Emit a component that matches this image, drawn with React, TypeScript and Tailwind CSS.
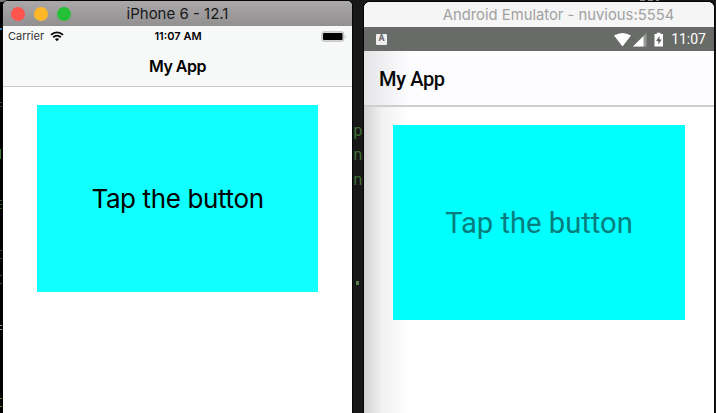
import React from "react";

function EditorBackdrop() {
  return (
    <div className="absolute inset-0 bg-[#171717] font-['DejaVu_Sans_Mono',monospace] text-[16px] leading-none text-[#3f6b35]">
      <div className="absolute inset-y-0 left-0 w-[3px] bg-black" />
      <div className="absolute top-0 left-[80px] h-[2px] w-[15px] bg-[#2878a8]" />
      <div className="absolute top-0 left-0 h-[2px] w-[22px] bg-[#777]" />
      <div className="absolute top-0 left-[108px] h-[2px] w-[58px] bg-[repeating-linear-gradient(90deg,#555_0_4px,#171717_4px_8px)]" />
      <div className="absolute top-0 left-[640px] h-[2px] w-[19px] bg-[repeating-linear-gradient(90deg,#888_0_5px,#171717_5px_8px)]" />
      <span className="absolute top-[123px] left-[353px]">p</span>
      <span className="absolute top-[147px] left-[353px]">n</span>
      <span className="absolute top-[172px] left-[353px]">n</span>
      <span className="absolute top-[281px] left-[356px] h-[4px] w-[3px] bg-[#56794e]" />
      <span className="absolute top-[28px] left-0 h-[2px] w-[3px] bg-[#2878a8]" />
      <span className="absolute top-[102px] left-0 h-[8px] w-[2px] bg-[repeating-linear-gradient(#2d5a20_0_1px,#000_1px_4px)]" />
      <span className="absolute top-[149px] left-0 h-[10px] w-[1px] bg-[#3f7a35]" />
      <span className="absolute top-[200px] left-0 h-[10px] w-[2px] bg-[repeating-linear-gradient(#2d5a20_0_1px,#000_1px_4px)]" />
      <span className="absolute top-[250px] left-0 h-[10px] w-[2px] bg-[repeating-linear-gradient(#2d5a20_0_1px,#000_1px_8px)]" />
      <span className="absolute top-[275px] left-0 h-[15px] w-[2px] bg-[repeating-linear-gradient(#2d5a20_0_1px,#000_1px_8px)]" />
      <span className="absolute top-[325px] left-0 h-[6px] w-[2px] bg-[repeating-linear-gradient(#999_0_1px,#000_1px_4px)]" />
      <span className="absolute top-[398px] left-0 h-[10px] w-[2px] bg-[repeating-linear-gradient(#86864a_0_1px,#000_1px_8px)]" />
    </div>
  );
}

function WifiIcon() {
  return (
    <svg className="h-[11px] w-[14px]" viewBox="0 0 14 11" fill="none" stroke="#080808" strokeWidth="1.9">
      <path d="M1 3.9C4.5.5 9.5.5 13 3.9" />
      <path d="M3.2 6.3C5.4 4.2 8.6 4.2 10.8 6.3" />
      <path d="M4.9 8Q7 6.3 9.1 8L7 10.2Z" fill="#080808" stroke="none" />
    </svg>
  );
}

function IPhoneWindow() {
  return (
    <section className="absolute top-px left-[3px] flex h-[412px] w-[349px] flex-col overflow-hidden rounded-t-[5px] bg-white font-[Inter,sans-serif] text-black shadow-[0_0_0_1px_#050505]">
      <div className="flex h-[25px] shrink-0 items-center bg-linear-to-b from-[#aaa8a9] to-[#918f90] px-[8px] pt-px">
        <div className="flex flex-1 gap-[9px]">
          <i className="size-[14px] rounded-full bg-[#ff554f]" />
          <i className="size-[14px] rounded-full bg-[#ffb729]" />
          <i className="size-[14px] rounded-full bg-[#24c138]" />
        </div>
        <h1 className="text-[15px] whitespace-nowrap text-[#181818]">iPhone 6 - 12.1</h1>
        <div className="flex-1" />
      </div>
      <header className="h-[61px] shrink-0 border-b border-[#c9c9cb] bg-[#f7f8f8]">
        <div className="grid h-[21px] grid-cols-3 items-center px-[5px]">
          <div className="flex items-center gap-[6px] text-[11px] text-[#333]">
            <span>Carrier</span>
            <WifiIcon />
          </div>
          <span className="pl-px text-center text-[11px] font-semibold whitespace-nowrap">11:07 AM</span>
          <svg className="h-[11px] w-[26px] justify-self-end" viewBox="0 0 26 11">
            <rect x=".8" y=".8" width="22" height="9.4" rx="2" fill="#ddd" stroke="#bbb" />
            <rect x="2" y="2" width="19.5" height="7" rx="1" fill="#000" />
            <path d="M24 4Q25.5 5.5 24 7Z" fill="#999" />
          </svg>
        </div>
        <h2 className="flex h-[38px] items-center justify-center text-[16px] font-semibold tracking-[-0.5px]">My App</h2>
      </header>
      <main className="pt-[18px] pl-[34px]">
        <div className="flex h-[187px] w-[281px] items-center justify-center bg-[#10ffff] text-[26px] tracking-[-0.37px]">
          <span className="whitespace-nowrap">Tap the button</span>
        </div>
      </main>
    </section>
  );
}

function AndroidWindow() {
  return (
    <section className="absolute top-[2px] left-[364px] flex h-[411px] w-[350px] flex-col overflow-hidden rounded-t-[6px] bg-white font-[Roboto,sans-serif] shadow-[0_0_0_1px_#050505]">
      <div className="flex h-[25px] shrink-0 items-center justify-center bg-[#f5f5f5] pt-[2px] pl-[39px] font-[Inter,sans-serif] text-[14.8px] whitespace-nowrap text-[#a1a1a1]">
        Android Emulator - nuvious:5554
      </div>
      <div className="flex h-[24px] shrink-0 items-center justify-between bg-[#696b68] pr-[8px] pl-[12px]">
        <span className="flex h-[11px] w-[11px] items-center justify-center rounded-[1px] bg-[#eee] text-[9px] font-bold text-[#666]">A</span>
        <div className="flex items-center pt-px">
          <svg className="h-[16px] w-[52px]" viewBox="0 0 52 16">
            <path d="M1 3.6Q9.5-1.6 18 3.6L9.5 14.5Z" fill="#fff" />
            <path d="M20 14.5L33.5 1V14.5Z" fill="#989a97" />
            <path d="M20 14.5L30.5 4V14.5Z" fill="#fff" />
            <path d="M41.5 2h2.3V.7h3.7V2H50v12.5H41.5Z" fill="#fff" />
            <path d="M46.5 4L43 9h2.3v3.5L48.8 7.5h-2.3Z" fill="#60625f" />
          </svg>
          <span className="ml-[6px] text-[14px] text-white">11:07</span>
        </div>
      </div>
      <header className="flex h-[56px] shrink-0 items-center border-b-2 border-[#cecdd0] bg-linear-to-r from-[#e5e4e6] to-[#fdfcff] to-[45px] pt-px pl-[15px]">
        <h2 className="text-[20px] font-medium tracking-[-0.35px] text-[#080808]">My App</h2>
      </header>
      <main className="min-h-0 flex-1 bg-linear-to-r from-[#d2d2d2] via-[#f1f1f1] via-[18px] to-white to-[45px] pt-[18px] pl-[29px]">
        <div className="flex h-[195px] w-[292px] items-center justify-center bg-[#00ffff] pt-[2px] text-[29.2px] text-[#087d7d]">
          <span className="whitespace-nowrap">Tap the button</span>
        </div>
      </main>
    </section>
  );
}

export default function App() {
  return (
    <div className="relative h-[413px] w-[716px] overflow-hidden bg-[#171717]">
      <EditorBackdrop />
      <IPhoneWindow />
      <AndroidWindow />
    </div>
  );
}
